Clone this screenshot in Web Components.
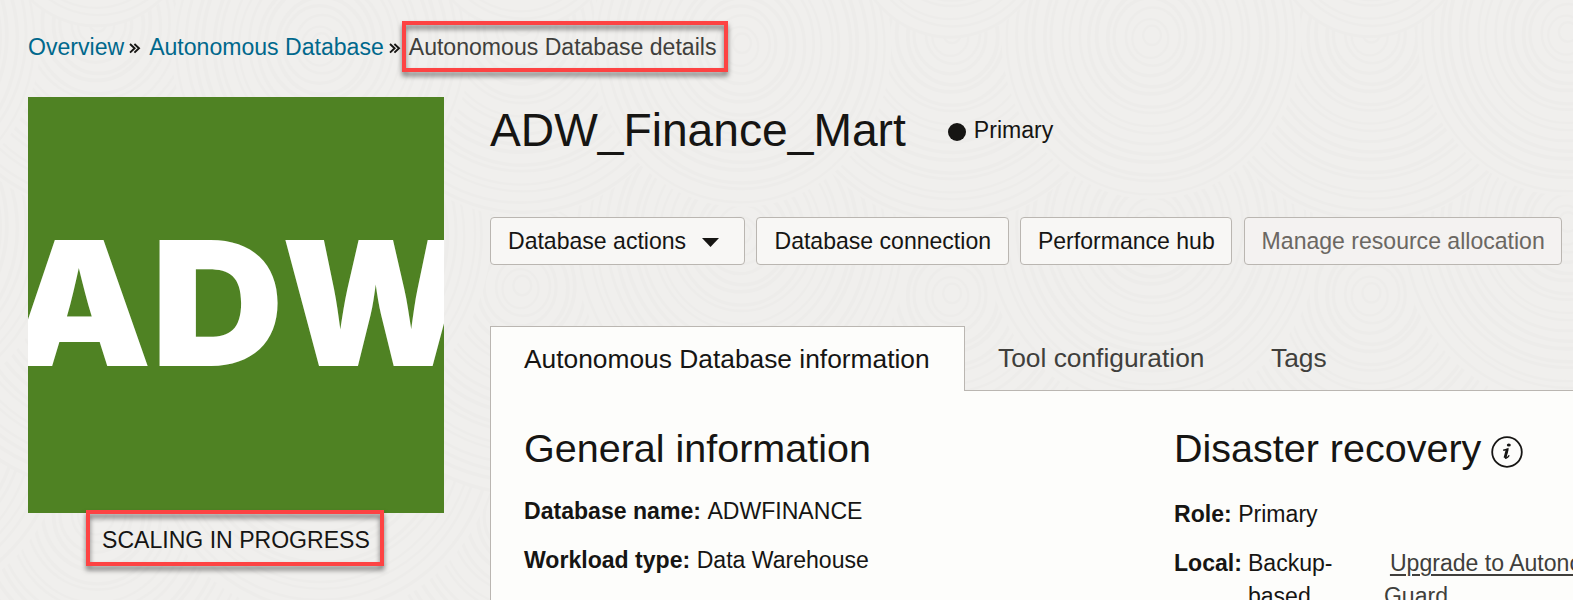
<!DOCTYPE html>
<html lang="en">
<head>
<meta charset="utf-8">
<title>Autonomous Database details</title>
<style>
html,body{margin:0;height:100%;overflow:hidden;background:#f0efed;font-family:"Liberation Sans",Arial,sans-serif;color:#161513}
</style>
</head>
<body>
<db-page></db-page>
<script>
function define(name, html, after){
  customElements.define(name, class extends HTMLElement{
    constructor(){
      super();
      const t=document.createElement('template');
      t.innerHTML=html;
      this.attachShadow({mode:'open'}).append(t.content.cloneNode(true));
      if(after) after(this.shadowRoot,this);
    }
  });
}
/* Faint overlapping ripple texture behind the page */
define('ripple-texture',`<style>:host{display:block;position:absolute;inset:0;z-index:-1}svg{display:block;width:100%;height:100%}</style>
<svg><g id="g"></g></svg>`,root=>{
  const g=root.getElementById('g');
  const spots=[[315,600,190],[105,520,190],[315,420,180],[105,290,190],[315,230,170],[105,30,175],[315,40,150],[105,-75,100]];
  let s='';
  for(const [x,y,r] of spots)for(let ox=-420;ox<=1680;ox+=420){
    const k=Math.sin(ox*3.1+x)*8,cx=x+ox+k,cy=y+k*.8;
    if(cx<-r||cx>1573+r)continue;
    s+='<ellipse cx="'+cx+'" cy="'+cy+'" rx="'+r+'" ry="'+(r*1.08)+'" fill="#f0efed"/>';
    for(let q=9;q<r;q+=9)s+='<ellipse cx="'+(cx+Math.sin(q)*1.5)+'" cy="'+(cy+Math.cos(q)*2)+'" rx="'+q+'" ry="'+(q*1.08)+'" fill="none" stroke="#edecea" stroke-width="'+(3+Math.sin(q*2)*.8)+'"/>';
  }
  g.innerHTML=s;
});
define('callout-box',`<style>:host{display:block;box-sizing:border-box;border:4px solid #fd4343;filter:drop-shadow(0 4px 2.5px rgba(0,0,0,.5));pointer-events:none}</style>`);
define('crumb-trail',`<style>
:host{display:flex;height:97px;padding:34px 0 0 28px;box-sizing:border-box;align-items:flex-start;position:relative;font-size:23.07px;line-height:27px;white-space:nowrap}
.link{color:#00688c}.here{color:#403f3c}
svg{display:block;width:12px;height:11px;margin:9px 8px 0 5px}
callout-box{position:absolute;left:402px;top:21px;width:326px;height:51px}
</style><span class="link"><slot name="one"></slot></span>
<svg viewBox="0 0 12 11"><path d="M1 1l4.6 4.3L1 9.6M5.4 1l4.6 4.3-4.6 4.3" fill="none" stroke="#161513" stroke-width="1.9"/></svg>
<span class="link"><slot name="two"></slot></span>
<svg viewBox="0 0 12 11"><path d="M1 1l4.6 4.3L1 9.6M5.4 1l4.6 4.3-4.6 4.3" fill="none" stroke="#161513" stroke-width="1.9"/></svg>
<span class="here"><slot name="three"></slot></span><callout-box></callout-box>`);
define('db-tile',`<style>
:host{display:block;width:416px}
.t{height:415.5px;background:#4f8223;overflow:hidden;color:#fff;box-sizing:border-box;padding-top:120px}
.w{display:block;width:max-content;font:900 173.5px/173px Inter,sans-serif;letter-spacing:4px;margin-left:-20px;white-space:nowrap}
.w i{display:inline-block;font-style:normal}
.la{transform:translateX(3px) scaleX(1.04)}.ld{transform:translateX(5px) scaleX(1.06)}.lw{transform:translateX(3px) scaleX(1.005)}
.s{position:relative;font-size:23.07px;line-height:27px;padding:14px 0 0 74px;white-space:nowrap}
callout-box{position:absolute;left:58px;top:-3px;width:298px;height:56px}
</style><div class="t"><span class="w"><i class="la">A</i><i class="ld">D</i><i class="lw">W</i></span></div><div class="s"><slot></slot><callout-box></callout-box></div>`);
define('action-button',`<style>
:host{display:flex;box-sizing:border-box;height:48px;border:1px solid #bab6b1;border-radius:4px;background:#f8f7f5;padding:0 16.5px 0 17px;align-items:center;font-size:23.05px;white-space:nowrap;line-height:46px}
:host([disabled]){background:#f4f2f1;color:#6b6762}
svg{display:none;margin-left:16px}:host([menu]) svg{display:block;margin-top:3px;margin-right:8.5px}
</style><slot></slot><svg width="17" height="9"><path d="M0 0H17L8.5 9Z" fill="#161513"/></svg>`);
define('info-row',`<style>:host{display:flex;font-size:23.07px;line-height:33px;white-space:nowrap}b{margin-right:6.5px}</style><b><slot name="k"></slot></b><span><slot></slot></span>`);
define('info-icon',`<style>:host{display:block;width:34px;height:34px}svg{display:block}</style><svg width="34" height="34" viewBox="0 0 34 34"><circle cx="17" cy="17" r="14.8" fill="none" stroke="#161513" stroke-width="1.8"/><ellipse cx="18.8" cy="9.9" rx="2" ry="1.5" fill="#161513"/><path d="M13.2 15.3q2.6-.5 4.5-1.3l-2.2 7.8q-.4 1.8.6 1.4 1.6-.6 3.1-2.8" fill="none" stroke="#161513" stroke-width="1.4"/><path d="M17.3 14.2l-2.3 8.6" stroke="#161513" stroke-width="2.8"/></svg>`);
define('tab-panel',`<style>
:host{display:flex;flex-direction:column;flex:1}
.tabs{display:flex;height:65px;font-size:26.35px;line-height:64px;white-space:nowrap;color:#403f3c}
.on{box-sizing:border-box;width:475px;border:1px solid #bab6b1;border-bottom:0;background:#fdfdfb;padding-left:33px;color:#161513}
.off{box-sizing:border-box;border-bottom:1px solid #bab6b1;padding-left:33px}
.o1{width:273px}.o2{flex:1}
.body{flex:1;border-left:1px solid #bab6b1;background:#fdfdfb;display:grid;grid-template-columns:650px 1fr;padding:31px 0 0 33px}
h2{font-size:39.5px;font-weight:400;line-height:52px;margin:0;white-space:nowrap;height:52px}
.h{display:flex;height:52px}.h info-icon{margin:13px 0 0 8.5px}
.l info-row:first-of-type{margin-top:21px;margin-bottom:16px;height:33px}
.r info-row{margin-top:24px}
.loc{display:flex;font-size:23.07px;line-height:33px;margin-top:16px;white-space:nowrap}
.loc b{margin-right:6px}.loc .v{width:136px}.loc a{color:#403f3c}
u{margin-left:6px;text-decoration-thickness:2px;text-underline-offset:3px}
</style>
<div class="tabs"><div class="on">Autonomous Database information</div><div class="off o1">Tool configuration</div><div class="off o2">Tags</div></div>
<div class="body"><div class="l"><h2>General information</h2>
<info-row><span slot="k">Database name:</span>ADWFINANCE</info-row><info-row><span slot="k">Workload type:</span>Data Warehouse</info-row></div>
<div class="r"><div class="h"><h2>Disaster recovery</h2><info-icon></info-icon></div>
<info-row><span slot="k">Role:</span>Primary</info-row>
<div class="loc"><b>Local:</b><div class="v">Backup-<br>based</div><a><u>Upgrade to Autonomous Data</u><br>Guard</a></div></div></div>`);
define('db-page',`<style>
:host{display:flex;flex-direction:column;width:1573px;height:600px;overflow:hidden;position:relative;z-index:0}
.main{display:flex;flex:1;gap:46px;padding-left:28px;min-height:0}
db-tile{flex:none}
.c{flex:1;min-width:0;display:flex;flex-direction:column}
.head{display:flex;flex:none;height:120px;white-space:nowrap}
h1{margin:0;font-weight:400;font-size:46.2px;line-height:66px}
.dot{width:18px;height:18px;border-radius:50%;background:#161513;margin:26px 8px 0 42px}
.p{font-size:23.07px;line-height:66px}
.btns{display:flex;flex:none;gap:11.4px;height:109px}
</style><ripple-texture></ripple-texture>
<crumb-trail><span slot="one">Overview</span><span slot="two">Autonomous Database</span><span slot="three">Autonomous Database details</span></crumb-trail>
<div class="main"><db-tile>SCALING IN PROGRESS</db-tile><div class="c">
<div class="head"><h1>ADW_Finance_Mart</h1><span class="dot"></span><span class="p">Primary</span></div>
<div class="btns"><action-button menu>Database actions</action-button><action-button>Database connection</action-button><action-button>Performance hub</action-button><action-button disabled>Manage resource allocation</action-button></div>
<tab-panel></tab-panel></div></div>`);
</script>
</body>
</html>
